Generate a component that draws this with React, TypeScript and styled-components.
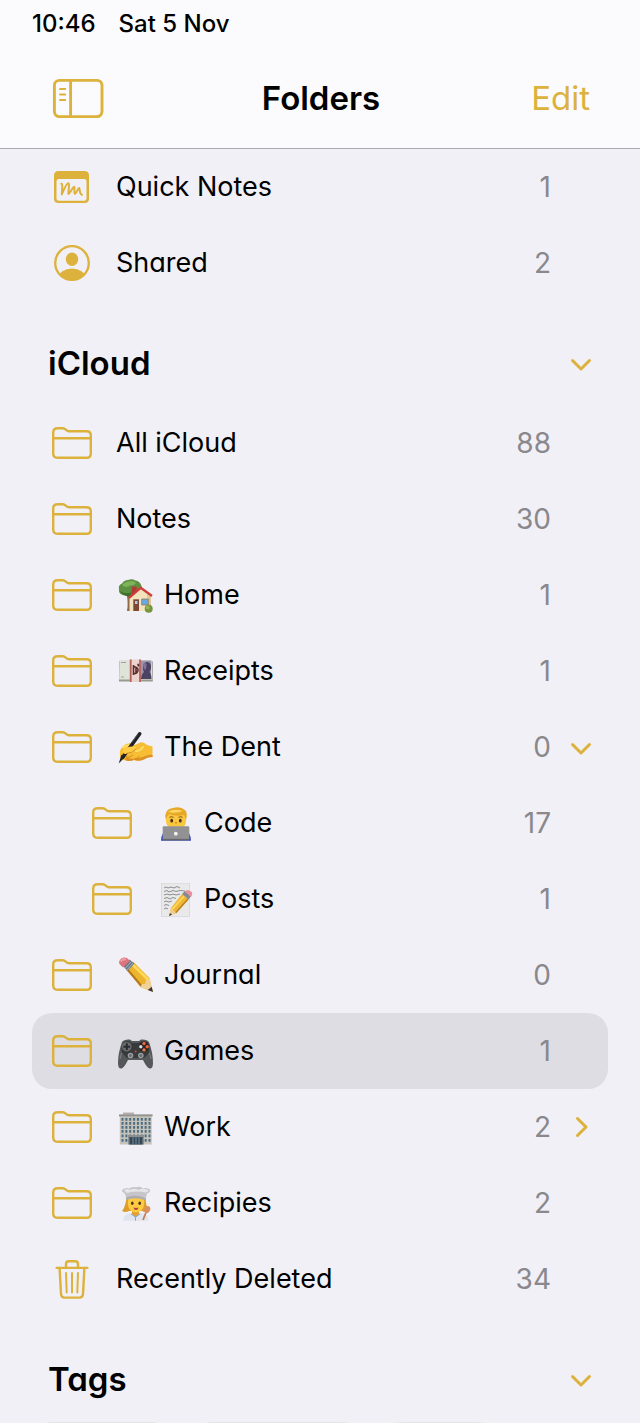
import React, { useId } from "react";
import styled, { createGlobalStyle, css } from "styled-components";

const gold = "#dcb23c";

const GlobalStyle = createGlobalStyle`
  * { box-sizing: border-box; }
  body {
    margin: 0;
    background: #f1f0f6;
    color: #000;
    font-family: Inter, "Liberation Sans", sans-serif;
  }
  h1, h2, ul { margin: 0; padding: 0; }
  ul { list-style: none; }
  button {
    font: inherit;
    border: 0;
    padding: 0;
    background: none;
    color: ${gold};
    cursor: pointer;
  }
  svg { display: block; }
`;

const Screen = styled.div`
  display: flex;
  flex-direction: column;
  height: 100vh;
`;

const TopBar = styled.header`
  flex: none;
  background: #fbfbfd;
  border-bottom: 1px solid #a9a9b0;
`;

const StatusBar = styled.div`
  display: flex;
  gap: 23px;
  height: 48px;
  padding: 0 32px;
  font-size: 24px;
  font-weight: 500;
  line-height: 48px;
`;

const NavBar = styled.nav`
  display: grid;
  grid-template-columns: 1fr auto 1fr;
  align-items: center;
  height: 100px;
  padding: 0 50px 0 52px;
`;

const Title = styled.h1`
  font-size: 33px;
  font-weight: 600;
  line-height: 40px;
`;

const SidebarButton = styled.button`
  justify-self: start;
`;

const EditButton = styled.button`
  justify-self: end;
  font-size: 33px;
  line-height: 40px;
`;

const Content = styled.main`
  flex: 1;
  min-height: 0;
  overflow-y: auto;
  scrollbar-width: none;
  padding: 0 32px;
  font-feature-settings: "cv11";
`;

const SectionHeader = styled.div`
  display: flex;
  align-items: center;
  justify-content: space-between;
  height: 104px;
  padding: 20px 16px 0;
`;

const SectionTitle = styled.h2`
  font-size: 33px;
  font-weight: 600;
  line-height: 40px;
`;

const Row = styled.li<{ $nested?: boolean; $selected?: boolean }>`
  display: flex;
  align-items: center;
  gap: 19px;
  height: 76px;
  padding: 0 16px 0 ${(p) => (p.$nested ? 60 : 20)}px;
  border-radius: 20px;
  ${(p) =>
    p.$selected &&
    css`
      background: #dedde3;
    `}
`;

const RowLink = styled.a`
  display: flex;
  flex: 1;
  align-items: center;
  min-width: 0;
  color: inherit;
  font-size: 27px;
  line-height: 36px;
  text-decoration: none;
`;

const IconSlot = styled.span`
  display: flex;
  flex: none;
  justify-content: center;
  width: 40px;
  margin-right: 24px;
  color: ${gold};
`;

const EmojiSlot = styled.span`
  display: flex;
  flex: none;
  justify-content: center;
  width: 40px;
  margin-right: 8px;
`;

const Label = styled.span`
  flex: 1;
`;

const Count = styled.span`
  color: #89888d;
  font-size: 28px;
`;

const ToggleSlot = styled.span`
  display: flex;
  flex: none;
  width: 22px;
`;

const TagList = styled.div`
  display: flex;
  gap: 20px;
  overflow: hidden;
  padding: 1px 0 32px;
`;

const Tag = styled.span<{ $width: number }>`
  flex: none;
  width: ${(p) => p.$width}px;
  height: 64px;
  border-radius: 20px;
  background: #e3e3e8;
`;

const SidebarIcon = () => (
  <svg width="52" height="42" viewBox="0 0 52 42" fill="none" stroke="currentColor" aria-hidden="true">
    <rect x="2.4" y="3.400" width="47.600" height="36.2" rx="5" strokeWidth="2.9" />
    <path d="M18.6 3.500V39.600" strokeWidth="2.9" />
    <path d="M8 12h5.2M8 17.500h5.200M8 23h5.200" strokeWidth="2" strokeLinecap="round" />
  </svg>
);

const FolderIcon = () => (
  <svg width="40" height="34" viewBox="0 0 40 34" fill="none" stroke="currentColor" strokeWidth="2.400" aria-hidden="true">
    <path
      d="M1.200 6.500C1.200 3.400 2.800 2.200 5.500 2.200H10.500C14 2.200 14 5.300 17 5.300H34.500C37.500 5.300 38.800 7 38.800 9.500V27.500C38.800 30.500 37.500 31.800 34.500 31.800H5.500C2.500 31.800 1.200 30.500 1.200 27.500Z"
      strokeLinejoin="round"
    />
    <path d="M1.200 12.200H38.800" />
  </svg>
);

const QuickNoteIcon = () => (
  <svg width="36" height="34" viewBox="0 0 36 34" aria-hidden="true">
    <path
      fill="currentColor"
      fillRule="evenodd"
      d="M4.500 1H30.500Q35 1 35 5.500V28.500Q35 33 30.500 33H4.500Q0 33 0 28.500V5.500Q0 1 4.500 1ZM4.800 9Q2.500 9 2.500 11.200V28.200Q2.500 30.700 5 30.700H30Q32.500 30.700 32.500 28.200V11.200Q32.500 9 30.200 9Z"
    />
    <path
      d="M7.300 13.800C8.800 13.500 8.200 17 7.800 24.500C9.800 19.500 12.500 13.500 14.300 13.200C16.300 14 14 20 14.500 24C17 22.500 18 17.500 20.300 16.800C21.200 18 19.500 21.500 20.800 23.800C22.800 23.500 23.300 18.500 25.300 18C26 20 25 23.500 28 24.800"
      fill="none"
      stroke="currentColor"
      strokeWidth="2"
      strokeLinecap="round"
      strokeLinejoin="round"
    />
  </svg>
);

const PersonIcon = () => {
  const clip = useId();
  return (
    <svg width="36" height="36" viewBox="0 0 36 36" fill="currentColor" aria-hidden="true">
      <clipPath id={clip}>
        <circle cx="18" cy="18" r="17" />
      </clipPath>
      <circle cx="18" cy="18" r="16.800" fill="none" stroke="currentColor" strokeWidth="2.300" />
      <ellipse cx="18" cy="14.300" rx="6.200" ry="6.800" />
      <ellipse cx="18" cy="32.500" rx="13.500" ry="9" clipPath={`url(#${clip})`} />
    </svg>
  );
};

const TrashIcon = () => (
  <svg width="36" height="40" viewBox="0 0 36 40" fill="none" stroke="currentColor" strokeLinecap="round" aria-hidden="true">
    <path d="M2.500 8.800H33.500" strokeWidth="2.300" />
    <path d="M12 8.500V5Q12 2.200 14.800 2.200H21.200Q24 2.200 24 5V8.500" strokeWidth="2.400" />
    <path d="M5.600 9L7 34.800Q7.300 38.600 10.800 38.600H25.200Q28.700 38.600 29 34.800L30.400 9" strokeWidth="2.400" />
    <path d="M12 14L12.700 33.500M18 14V33.500M24 14L23.300 33.500" strokeWidth="2" />
  </svg>
);

const Chevron = ({ right }: { right?: boolean }) => (
  <svg width="22" height="22" viewBox="0 0 22 22" fill="none" stroke="currentColor" strokeWidth="3" strokeLinecap="round" strokeLinejoin="round" aria-hidden="true">
    <path d={right ? "M7.500 2.500L16 11L7.500 19.500" : "M2.500 8.500L11 17L19.500 8.500"} />
  </svg>
);

const Emoji = ({ label, children }: { label: string; children: React.ReactNode }) => (
  <svg width="36" height="36" viewBox="0 0 36 36" role="img" aria-label={label}>
    {children}
  </svg>
);

const House = () => (
  <Emoji label="House with garden">
    <path d="M8.500 17H12.500V34H9Q10.500 25 8.500 17Z" fill="#8d6a4b" />
    <path d="M1 12Q0 8 4 6.500Q6 3 10 3Q14 1.200 17.500 3.500Q22 4 23.500 9Q25.500 14 20 17Q14 20.500 8 18.500Q0 18 1 12Z" fill="#5c9141" />
    <path d="M4 8Q7 4.500 11 4.500Q15 3 18 6Q16 9 12 8.500Q8 11.500 4 8Z" fill="#7fb35a" />
    <path d="M2 14Q8 18 14 15L12 19Q5 20 2 14Z" fill="#3f6f2c" />
    <path d="M13.700 9.500H18.700V17H13.700Z" fill="#b23a35" />
    <path d="M11.500 20L22.500 11L33 19V34H11.500Z" fill="#f4e4bd" />
    <path d="M29 17L33 20V34H30.500Z" fill="#dcc697" />
    <path d="M11 20.800L22.700 10.800L34 19" fill="none" stroke="#cf3d38" strokeWidth="2.300" strokeLinejoin="round" />
    <path d="M15.300 22.300H21V34H15.300Z" fill="#7c4934" />
    <path d="M17 24H19.500V27H17Z" fill="#a9cbe5" />
    <path d="M23.700 22H30.300V28H23.700Z" fill="#67a9e3" stroke="#9a7954" strokeWidth=".8" />
    <circle cx="30.700" cy="31.700" r="4" fill="#76963b" />
    <circle cx="29.700" cy="30.500" r="2" fill="#95b255" />
  </Emoji>
);

const Banknote = () => (
  <Emoji label="Pound banknote">
    <path d="M1 9L1 28.500H34.800V8.500L33 7.500H2Z" fill="#989a90" />
    <path d="M1.500 7H33.500L34.300 26.500H1.200Z" fill="#e0e3d8" />
    <path d="M3 9.500H8M3 24H6" stroke="#9ea0a8" strokeWidth="1" />
    <path d="M22 7.500H33V26H22Z" fill="#9b94ae" />
    <path d="M23 26Q23.500 21 26 19Q23.500 14 26.500 10Q30 7.500 32.500 11Q34 15 31.500 19Q33.500 21 33.500 26Z" fill="#4b4264" />
    <path d="M25 11Q27 9 28.500 11Q28.500 16 27 17Q25 15 25 11Z" fill="#81739a" />
    <path d="M11.800 6.500H22.900V29H11.800Z" fill="#ecd3ce" />
    <path d="M12.700 6.500V29M22 6.500V29" stroke="#b2605c" strokeWidth="1.800" />
    <path d="M15.500 12V22M15.500 20.500Q19 21 20 17.500Q20.500 14.500 15.500 13.500M18 14.500V21M20.300 13.500Q21 12 19.500 11" fill="none" stroke="#5d2a2c" strokeWidth="1.600" />
  </Emoji>
);

const WritingHand = () => (
  <Emoji label="Writing hand">
    <path d="M2 27Q1 21 5 17Q10 13 14 15L17 16L21 14Q25 12 29 16L34.500 17.500V28Q29 28 27 30Q22 33 16 31Q10 33 7 31Q2 32 2 27Z" fill="#f7be35" />
    <path d="M8 28Q14 31.500 25 28Q31 25 34.500 26V28Q29 28 27 30Q22 33 16 31Q10 33 7 31Z" fill="#dd9124" />
    <path d="M5 18.500Q9 15.500 13 17M18 22Q22 22 25 18" fill="none" stroke="#ffdf6b" strokeWidth="2" strokeLinecap="round" />
    <path d="M21.700 4.800L5 28" stroke="#222326" strokeWidth="3.600" strokeLinecap="round" />
    <path d="M6.600 28.500L.7 34.500L3.500 25.500Z" fill="#222326" />
    <path d="M19.500 5.500L14 13" stroke="#65666b" strokeWidth=".8" />
    <path d="M5 21Q8 17.500 14 17.500Q19 16 18 20Q15 24.500 9 24.500Q5 26.500 5 21Z" fill="#ffcc43" />
    <path d="M8 24.500Q14 24.500 18 20M8 28Q12 29 15 26M17 30Q20 30 21 27" fill="none" stroke="#ca7e20" strokeWidth=".8" />
  </Emoji>
);

const Technologist = () => (
  <Emoji label="Man technologist">
    <path d="M3 35.700Q3 28 8 26H28Q33 28 33 35.700Z" fill="#3349bd" />
    <path d="M13 20H23V27H13Z" fill="#d99a25" />
    <path d="M8 13Q7 3 18 3Q29 3 28 13Q29 24 18 25Q7 24 8 13Z" fill="#fbc83d" />
    <path d="M7.500 14Q6 4 15 3Q22 .8 27 5Q30 8 28 15L26 10Q18 12 11 9Z" fill="#e7a829" />
    <path d="M10 7Q16 3 25 6Q18 9 10 7Z" fill="#ffd963" />
    <path d="M11.500 12.500Q13.500 11 15.500 12.500M20.500 12.500Q22.500 11 24.500 12.500" fill="none" stroke="#936021" strokeWidth="1.200" />
    <ellipse cx="13.700" cy="15.700" rx="1.400" ry="1.900" fill="#45301e" />
    <ellipse cx="22.300" cy="15.700" rx="1.400" ry="1.900" fill="#45301e" />
    <path d="M17 17.500Q18 19 19 17.500" fill="none" stroke="#bd7923" />
    <rect x="4.700" y="21.300" width="26.600" height="14" rx="1.200" fill="#929295" />
    <path d="M5 34.600H31" stroke="#66676b" strokeWidth="1.500" />
    <circle cx="17.800" cy="28.700" r="1.900" fill="#f4f4f5" />
  </Emoji>
);

const Memo = () => (
  <Emoji label="Memo">
    <path d="M3 2H32V35.700H3Z" fill="#d4d5d7" />
    <path d="M3.800 2.600H31.300V35H3.800Z" fill="#e9e9ea" />
    <path
      d="M6 7L8 6L10 7L13 6L16 7L19 5.500L22 7M6 10.500L9 9.500L11 11L15 9.500L18 10.500L22 9.500L27 10M6 14L9 13L12 14L15 13L18 14L22 13M6 17.500L9 16.500L12 18L15 16.500L18 17.500M6 21L8 20L11 21L14 20M6 24.500L8 23.500L11 24.500M6 28L8 27L10 28"
      fill="none"
      stroke="#808286"
      strokeWidth=".9"
    />
    <path d="M24 13L30.500 18.500L18 32L11 35L13 27Z" fill="#f1b733" />
    <path d="M26.200 15L14 28.500" stroke="#ffdc60" strokeWidth="1.500" />
    <path d="M30 18L17.500 32" stroke="#ba7e26" strokeWidth="1.500" />
    <path d="M13 27L18 32L11 35Z" fill="#edce9a" />
    <path d="M12 32L14 33.700L11 35Z" fill="#403c3b" />
    <path d="M24 13L27 10L33 15.500L30.500 18.500Z" fill="#868b91" />
    <path d="M27 10.500L29 9Q35.500 10 34 14L33 16Z" fill="#e990a0" />
  </Emoji>
);

const Pencil = () => (
  <Emoji label="Pencil">
    <path d="M8.500 12.500L15.500 5L31.500 21L35 35L22.500 30Z" fill="#edb42d" />
    <path d="M14 7L30.500 23" stroke="#ffd75a" strokeWidth="2.800" />
    <path d="M9 12L23.500 29" stroke="#b37922" strokeWidth="2" />
    <path d="M31.500 21L35 35L22.500 30L24 27L27 27L28 23L30.500 23Z" fill="#f0d19a" />
    <path d="M35 35L29.800 33L33.700 29.800Z" fill="#38383b" />
    <path d="M5 9L11.500 2.500L16.500 6.500L9.500 14Z" fill="#687887" />
    <path d="M7 11.500L13.500 4.500M9 13L15 6" stroke="#b2bbc5" strokeWidth="1" />
    <path d="M5 10.500L1.500 7Q0 4 3.500 1.500Q6 0 9 1L12 4Z" fill="#dc747e" />
    <path d="M2.500 4.500Q5 1.500 8 2.500" stroke="#f2a2a6" strokeWidth="1.800" fill="none" />
  </Emoji>
);

const Gamepad = () => (
  <Emoji label="Video game">
    <path d="M4 9Q6 6 12 6.500L14 8H21L23 6.500Q29 6 31 9Q35 20 35 30Q35 36 31.500 35.500Q29 35 25 27H10Q6 35 3.500 35.500Q0 36 0 30Q0 20 4 9Z" fill="#55585a" />
    <path d="M5 10Q8 7 12 8.500L14 10H21L23 8.500Q28 7 30 10Q32 16 31 20L26 25H9L4 20Q3 16 5 10Z" fill="#37393b" />
    <path d="M2 26Q3 21 4 20M33 26Q32 21 31 20" stroke="#77797b" strokeWidth="1.200" fill="none" />
    <circle cx="8.800" cy="13.700" r="4.800" fill="#6b6d6f" />
    <path d="M8.800 10.300V17.100M5.400 13.700H12.200" stroke="#2a2c2e" strokeWidth="2" />
    <circle cx="26" cy="13.700" r="5" fill="#222427" />
    <circle cx="26" cy="10.500" r="1.700" fill="#f06538" />
    <circle cx="22.800" cy="13.700" r="1.700" fill="#dadde0" />
    <circle cx="29.200" cy="13.700" r="1.700" fill="#ed6639" />
    <circle cx="26" cy="16.900" r="1.700" fill="#f37b3e" />
    <circle cx="12.500" cy="22.500" r="2.800" fill="#9b9fa1" />
    <circle cx="22.800" cy="22.500" r="2.800" fill="#9b9fa1" />
    <circle cx="12.500" cy="22.500" r="1.500" fill="#686c6f" />
    <circle cx="22.800" cy="22.500" r="1.500" fill="#686c6f" />
    <circle cx="17.600" cy="18.500" r="1.100" fill="#b84e35" />
  </Emoji>
);

const Office = () => (
  <Emoji label="Office building">
    <path d="M5 3.500H16V6H5Z" fill="#b2b1ae" />
    <path d="M1 5.500H34.500V7.500H33.700V35.500H1.800V7.500H1Z" fill="#c5c2ba" />
    <path d="M1 5.500H34.500V7.300H1Z" fill="#92918e" />
    {[9, 13, 17, 21, 25.500, 30].map((y) => (
      <path key={y} d={`M3.500 ${y + 1.400}H32.500`} stroke="#496b83" strokeWidth="2.800" strokeDasharray="2 1.860" />
    ))}
    <path d="M10 26H26V35.500H10Z" fill="#8d8e8e" />
    <path d="M11.500 28H24.500V35.500H11.500Z" fill="#304858" />
    <path d="M15 28V35.500M18 28V35.500M21 28V35.500" stroke="#8fa1aa" strokeWidth=".8" />
  </Emoji>
);

const Cook = () => (
  <Emoji label="Woman cook">
    <path d="M8.500 13Q7 23 4 26Q7.500 28 11 26H24Q28 28 31 25.500Q28 22 27.500 13Z" fill="#dc9e2b" />
    <path d="M5 35.700Q5.500 29 12 28H23Q30 29 30.500 35.700Z" fill="#dfe5ee" />
    <path d="M14 24H21V29L17.500 32L14 29Z" fill="#e2a12c" />
    <path d="M10 14Q10 10 18 10Q26 10 26 14Q27.500 26.500 18 27.500Q8.500 26.500 10 14Z" fill="#fdca42" />
    <path d="M8 12L6.500 8Q3 7 4.500 4.500Q8 2 11 3.500Q14 1.200 18 2.300Q23 1 25 3.500Q29 2 32 4.500Q32.500 7.500 29 8.500L28 13Q18 9.500 8 12Z" fill="#c6c6ca" />
    <path d="M6 5.500Q9 3 12 5Q17 2.500 20 5Q26 2.500 31 5.500L28 7.500Q18 5.500 9 8Z" fill="#e6e6e8" />
    <path d="M8 12Q18 9 28 13L27.500 15.500Q18 11.500 8.300 15Z" fill="#adadb3" />
    <ellipse cx="14.300" cy="18.300" rx="1.300" ry="1.700" fill="#4d321f" />
    <ellipse cx="21.700" cy="18.300" rx="1.300" ry="1.700" fill="#4d321f" />
    <path d="M15.500 22.500Q18 23.300 20.500 22.500Q20 25 18 25Q16 25 15.500 22.500Z" fill="#a84438" />
    <path d="M13 29L17.500 32L22 29M17.500 32V35.700" fill="none" stroke="#8ea1be" strokeWidth="1" />
    <ellipse cx="29.300" cy="24.500" rx="2.800" ry="3.600" transform="rotate(25 29.300 24.500)" fill="#d88f62" />
    <path d="M28 27.500L25 35" stroke="#c77e52" strokeWidth="1.800" />
  </Emoji>
);

type Folder = {
  name: string;
  count: number;
  icon?: React.ReactNode;
  emoji?: React.ReactNode;
  nested?: boolean;
  selected?: boolean;
  toggle?: "open" | "closed";
};

const pinned: Folder[] = [
  { name: "Quick Notes", count: 1, icon: <QuickNoteIcon /> },
  { name: "Shared", count: 2, icon: <PersonIcon /> },
];

const iCloud: Folder[] = [
  { name: "All iCloud", count: 88 },
  { name: "Notes", count: 30 },
  { name: "Home", count: 1, emoji: <House /> },
  { name: "Receipts", count: 1, emoji: <Banknote /> },
  { name: "The Dent", count: 0, emoji: <WritingHand />, toggle: "open" },
  { name: "Code", count: 17, emoji: <Technologist />, nested: true },
  { name: "Posts", count: 1, emoji: <Memo />, nested: true },
  { name: "Journal", count: 0, emoji: <Pencil /> },
  { name: "Games", count: 1, emoji: <Gamepad />, selected: true },
  { name: "Work", count: 2, emoji: <Office />, toggle: "closed" },
  { name: "Recipies", count: 2, emoji: <Cook /> },
  { name: "Recently Deleted", count: 34, icon: <TrashIcon /> },
];

const FolderRow = ({ folder }: { folder: Folder }) => (
  <Row $nested={folder.nested} $selected={folder.selected}>
    <RowLink href="#" aria-current={folder.selected ? "page" : undefined}>
      <IconSlot>{folder.icon ?? <FolderIcon />}</IconSlot>
      {folder.emoji && <EmojiSlot>{folder.emoji}</EmojiSlot>}
      <Label>{folder.name}</Label>
      <Count>{folder.count}</Count>
    </RowLink>
    <ToggleSlot>
      {folder.toggle && (
        <button type="button" aria-label={`Toggle ${folder.name}`} aria-expanded={folder.toggle === "open"}>
          <Chevron right={folder.toggle === "closed"} />
        </button>
      )}
    </ToggleSlot>
  </Row>
);

const Section = ({ title, children }: { title: string; children: React.ReactNode }) => (
  <section>
    <SectionHeader>
      <SectionTitle>{title}</SectionTitle>
      <button type="button" aria-label={`Toggle ${title}`} aria-expanded="true">
        <Chevron />
      </button>
    </SectionHeader>
    {children}
  </section>
);

export default function App() {
  return (
    <>
      <GlobalStyle />
      <Screen>
        <TopBar>
          <StatusBar>
            <span>10:46</span>
            <span>Sat 5 Nov</span>
          </StatusBar>
          <NavBar>
            <SidebarButton type="button" aria-label="Toggle sidebar">
              <SidebarIcon />
            </SidebarButton>
            <Title>Folders</Title>
            <EditButton type="button">Edit</EditButton>
          </NavBar>
        </TopBar>
        <Content>
          <ul>
            {pinned.map((f) => (
              <FolderRow key={f.name} folder={f} />
            ))}
          </ul>
          <Section title="iCloud">
            <ul>
              {iCloud.map((f) => (
                <FolderRow key={f.name} folder={f} />
              ))}
            </ul>
          </Section>
          <Section title="Tags">
            <TagList>
              <Tag $width={140} />
              <Tag $width={170} />
              <Tag $width={115} />
            </TagList>
          </Section>
        </Content>
      </Screen>
    </>
  );
}
